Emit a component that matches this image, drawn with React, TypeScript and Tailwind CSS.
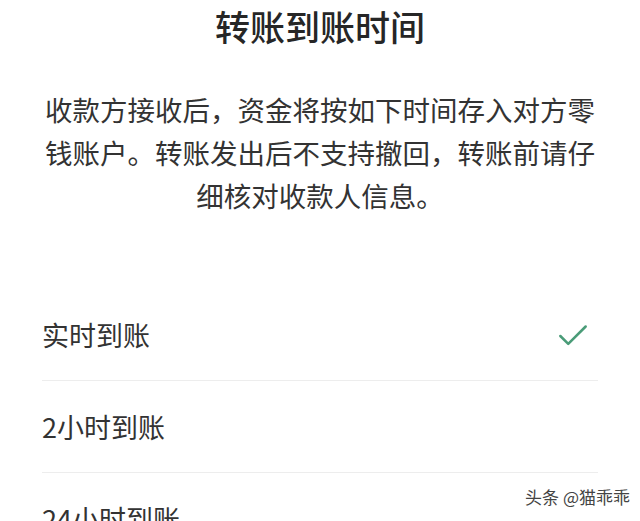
import { Check } from "lucide-react"

const options = ["实时到账", "2小时到账", "24小时到账"]

function App() {
  const selected = 0

  return (
    <div
      className="relative h-[521px] w-[640px] overflow-hidden bg-white text-[#2f2f2f]"
      style={{ fontFamily: '"Noto Sans CJK SC", "Noto Sans", sans-serif' }}
    >
      <h1 className="pt-[4px] text-center text-[35px] leading-[44px] font-medium text-[#262626]">
        转账到账时间
      </h1>
      <p className="mx-auto mt-[40px] w-[560px] text-center text-[27.5px] leading-[43px] text-[#333]">
        收款方接收后，资金将按如下时间存入对方零钱账户。转账发出后不支持撤回，转账前请仔细核对收款人信息。
      </p>

      <ul className="mt-[72px] px-[42px]">
        {options.map((label, i) => (
          <li
            key={label}
            className="flex h-[92px] items-center justify-between border-b border-[#ededed] pt-[2px] text-[27px] text-[#333]"
          >
            <span>{label}</span>
            {i === selected && (
              <Check className="mr-[6px] h-[38px] w-[38px] text-[#4a9c78]" strokeWidth={1.6} />
            )}
          </li>
        ))}
      </ul>

      <div
        className="absolute right-[6px] bottom-[13px] bg-white/80 px-[4px] text-[17px] leading-[22px] text-[#444]"
        style={{ textShadow: "0 0 4px #fff" }}
      >
        头条 @猫乖乖
      </div>
    </div>
  )
}

export default App
